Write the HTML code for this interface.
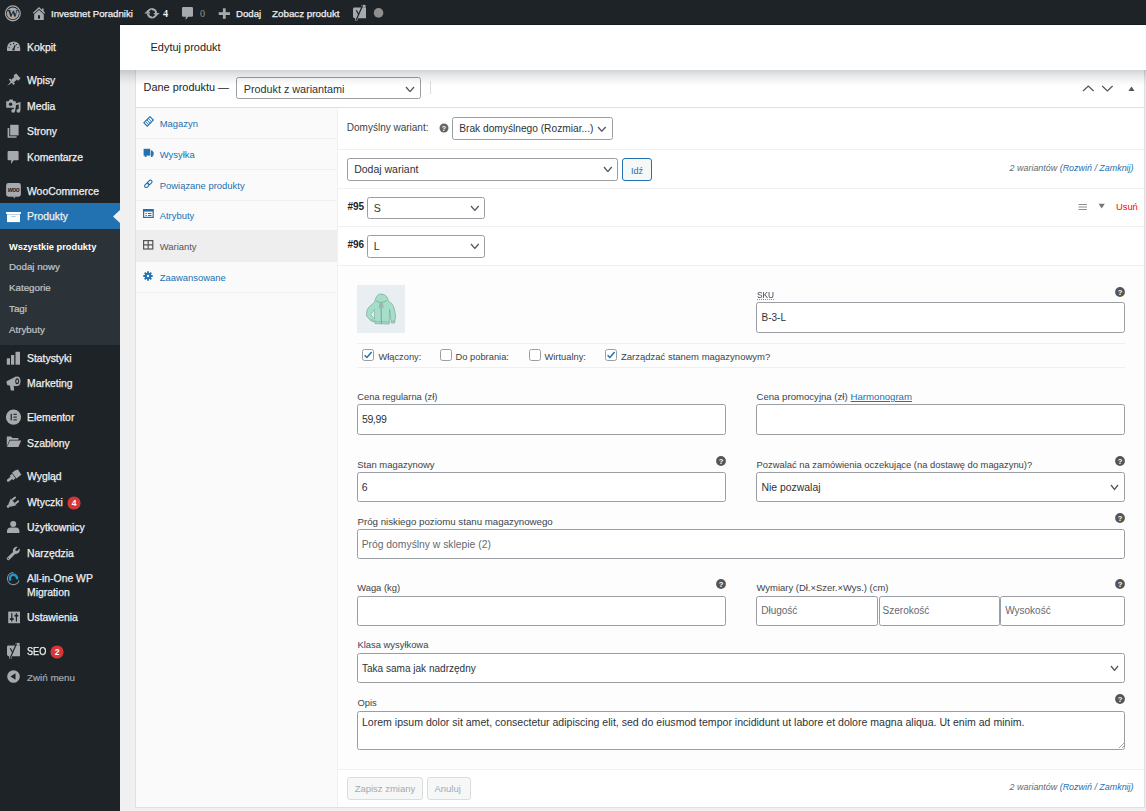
<!DOCTYPE html>
<html><head><meta charset="utf-8"><title>Edytuj produkt</title>
<style>
html,body{margin:0;padding:0;width:1146px;height:811px;overflow:hidden;background:#f0f0f1}
#root{position:relative;width:1146px;height:811px;overflow:hidden;font-family:"Liberation Sans",sans-serif}
.t{position:absolute;white-space:nowrap;font-family:"Liberation Sans",sans-serif}
.r{position:absolute;display:block}
</style></head><body><div id="root">
<div class="r" style="left:0px;top:0px;width:1146px;height:811px;background:#f0f0f1"></div>
<div class="r" style="left:0px;top:0px;width:1146px;height:24px;background:#1d2327"></div>
<svg class="r" style="left:4px;top:5px" width="18" height="18" viewBox="0 0 18 18"><circle cx="8.85" cy="8.35" r="7.4" fill="none" stroke="#a7aaad" stroke-width="1.3"/><circle cx="8.85" cy="8.35" r="5.9" fill="#a7aaad"/><text x="8.85" y="12.2" text-anchor="middle" font-family="Liberation Serif" font-weight="700" font-size="10.5" fill="#1d2327">W</text></svg>
<svg class="r" style="left:32px;top:7px" width="14" height="14" viewBox="0 0 14 14"><path d="M1.3 6.3 L7 1 L12.7 6.3" fill="none" stroke="#a7aaad" stroke-width="1.3"/><rect x="10" y="1.5" width="1.6" height="3.5" fill="#a7aaad"/><path d="M2.2 7.2 L7 2.9 L11.8 7.2 V12.9 H2.2Z" fill="#a7aaad"/><rect x="6" y="8.2" width="2" height="3.5" fill="#1d2327"/></svg>
<span class="t" style="left:51.00px;top:9px;font-size:9.64px;line-height:9.64px;color:#f0f0f1;font-weight:400;font-style:normal;-webkit-text-stroke:0.25px #f0f0f1">Investnet Poradniki</span>
<svg class="r" style="left:144px;top:8px" width="16" height="11" viewBox="0 0 16 11"><circle cx="8" cy="5.3" r="4.1" fill="none" stroke="#a7aaad" stroke-width="2.2"/><path d="M2.6 5.6 L8 1.3 L8 5.6Z" fill="#1d2327"/><path d="M13.4 5 L8 9.3 L8 5Z" fill="#1d2327"/><path d="M0.3 5.6 L3.9 2 L6.6 5.6Z" fill="#a7aaad"/><path d="M15.7 5 L12.1 8.6 L9.4 5Z" fill="#a7aaad"/></svg>
<span class="t" style="left:163.00px;top:9px;font-size:10.2px;line-height:10.2px;color:#f0f0f1;font-weight:700;font-style:normal;font-family:'Liberation Serif',serif">4</span>
<svg class="r" style="left:181px;top:6px" width="13" height="15" viewBox="0 0 13 15"><path d="M2.2 1 H10.8 Q12 1 12 2.2 V9.6 Q12 10.8 10.8 10.8 H7.2 L4.6 14 L4.8 10.8 H2.2 Q1 10.8 1 9.6 V2.2 Q1 1 2.2 1Z" fill="#a7aaad"/></svg>
<span class="t" style="left:199.90px;top:9px;font-size:10.2px;line-height:10.2px;color:#8f959a;font-weight:400;font-style:normal;font-family:'Liberation Serif',serif">0</span>
<svg class="r" style="left:218px;top:8px" width="13" height="11" viewBox="0 0 13 11"><rect x="4.9" y="0.3" width="2.8" height="10.5" fill="#a7aaad"/><rect x="0.7" y="4.2" width="11.3" height="2.8" fill="#a7aaad"/></svg>
<span class="t" style="left:236.00px;top:9px;font-size:9.64px;line-height:9.64px;color:#f0f0f1;font-weight:400;font-style:normal;-webkit-text-stroke:0.25px #f0f0f1">Dodaj</span>
<span class="t" style="left:272.00px;top:9px;font-size:9.8px;line-height:9.8px;color:#f0f0f1;font-weight:400;font-style:normal;-webkit-text-stroke:0.25px #f0f0f1">Zobacz produkt</span>
<svg class="r" style="left:352px;top:4px" width="16" height="18" viewBox="0 0 16 18"><path d="M2.4 3.5 H14 V14.3 H3 Q1 14.3 1 12.3 V4.9 Q1 3.5 2.4 3.5Z" fill="#a7aaad"/><path d="M9.6 0.9 H13.6 V3.6 H9.6Z" fill="#a7aaad"/><path d="M3 14 H6.2 L5.2 16.8 H3.2Z" fill="#a7aaad"/><path d="M4.3 6.3 L6.8 10.8" fill="none" stroke="#1d2327" stroke-width="1.2"/><path d="M10.6 1.6 L4 16.4" fill="none" stroke="#1d2327" stroke-width="1.2"/></svg>
<svg class="r" style="left:373px;top:7px" width="11" height="11" viewBox="0 0 11 11"><circle cx="5.55" cy="5.9" r="4.8" fill="#8f8f8f"/></svg>
<div class="r" style="left:0px;top:24px;width:120px;height:787px;background:#1d2327"></div>
<div class="r" style="left:0px;top:203px;width:120px;height:26px;background:#2271b1"></div>
<div class="r" style="left:0px;top:229px;width:120px;height:116px;background:#2c3338"></div>
<svg class="r" style="left:113px;top:210px" width="7" height="13" viewBox="0 0 7 13"><path d="M7 0 L0 6.5 L7 13Z" fill="#f0f0f1"/></svg>
<span class="t" style="left:27.00px;top:43px;font-size:10.4px;line-height:10.4px;color:#f0f0f1;font-weight:400;font-style:normal;-webkit-text-stroke:0.25px #f0f0f1">Kokpit</span>
<span class="t" style="left:27.00px;top:76px;font-size:10.4px;line-height:10.4px;color:#f0f0f1;font-weight:400;font-style:normal;-webkit-text-stroke:0.25px #f0f0f1">Wpisy</span>
<span class="t" style="left:27.00px;top:102px;font-size:10.4px;line-height:10.4px;color:#f0f0f1;font-weight:400;font-style:normal;-webkit-text-stroke:0.25px #f0f0f1">Media</span>
<span class="t" style="left:27.00px;top:127px;font-size:10.4px;line-height:10.4px;color:#f0f0f1;font-weight:400;font-style:normal;-webkit-text-stroke:0.25px #f0f0f1">Strony</span>
<span class="t" style="left:27.00px;top:153px;font-size:10.4px;line-height:10.4px;color:#f0f0f1;font-weight:400;font-style:normal;-webkit-text-stroke:0.25px #f0f0f1">Komentarze</span>
<span class="t" style="left:27.00px;top:187px;font-size:10.4px;line-height:10.4px;color:#f0f0f1;font-weight:400;font-style:normal;-webkit-text-stroke:0.25px #f0f0f1">WooCommerce</span>
<span class="t" style="left:27.00px;top:212px;font-size:10.4px;line-height:10.4px;color:#f0f0f1;font-weight:400;font-style:normal;-webkit-text-stroke:0.25px #f0f0f1">Produkty</span>
<span class="t" style="left:27.00px;top:354px;font-size:10.4px;line-height:10.4px;color:#f0f0f1;font-weight:400;font-style:normal;-webkit-text-stroke:0.25px #f0f0f1">Statystyki</span>
<span class="t" style="left:27.00px;top:379px;font-size:10.4px;line-height:10.4px;color:#f0f0f1;font-weight:400;font-style:normal;-webkit-text-stroke:0.25px #f0f0f1">Marketing</span>
<span class="t" style="left:27.00px;top:413px;font-size:10.4px;line-height:10.4px;color:#f0f0f1;font-weight:400;font-style:normal;-webkit-text-stroke:0.25px #f0f0f1">Elementor</span>
<span class="t" style="left:27.00px;top:439px;font-size:10.4px;line-height:10.4px;color:#f0f0f1;font-weight:400;font-style:normal;-webkit-text-stroke:0.25px #f0f0f1">Szablony</span>
<span class="t" style="left:27.00px;top:472px;font-size:10.4px;line-height:10.4px;color:#f0f0f1;font-weight:400;font-style:normal;-webkit-text-stroke:0.25px #f0f0f1">Wygląd</span>
<span class="t" style="left:27.00px;top:498px;font-size:10.4px;line-height:10.4px;color:#f0f0f1;font-weight:400;font-style:normal;-webkit-text-stroke:0.25px #f0f0f1">Wtyczki</span>
<span class="t" style="left:27.00px;top:523px;font-size:10.4px;line-height:10.4px;color:#f0f0f1;font-weight:400;font-style:normal;-webkit-text-stroke:0.25px #f0f0f1">Użytkownicy</span>
<span class="t" style="left:27.00px;top:549px;font-size:10.4px;line-height:10.4px;color:#f0f0f1;font-weight:400;font-style:normal;-webkit-text-stroke:0.25px #f0f0f1">Narzędzia</span>
<span class="t" style="left:27.00px;top:574px;font-size:10.4px;line-height:10.4px;color:#f0f0f1;font-weight:400;font-style:normal;-webkit-text-stroke:0.25px #f0f0f1">All-in-One WP</span>
<span class="t" style="left:27.00px;top:588px;font-size:10.4px;line-height:10.4px;color:#f0f0f1;font-weight:400;font-style:normal;-webkit-text-stroke:0.25px #f0f0f1">Migration</span>
<span class="t" style="left:27.00px;top:613px;font-size:10.4px;line-height:10.4px;color:#f0f0f1;font-weight:400;font-style:normal;-webkit-text-stroke:0.25px #f0f0f1">Ustawienia</span>
<span class="t" style="left:27.00px;top:647px;font-size:10.4px;line-height:10.4px;color:#f0f0f1;font-weight:400;font-style:normal;-webkit-text-stroke:0.25px #f0f0f1;display:inline-block;transform:scaleX(0.88);transform-origin:0 0">SEO</span>
<span class="t" style="left:27.00px;top:673px;font-size:9.8px;line-height:9.8px;color:#a7aaad;font-weight:400;font-style:normal;-webkit-text-stroke:0.2px #a7aaad">Zwiń menu</span>
<span class="t" style="left:9.00px;top:243px;font-size:9.3px;line-height:9.3px;color:#ffffff;font-weight:700;font-style:normal;">Wszystkie produkty</span>
<span class="t" style="left:9.00px;top:262px;font-size:9.75px;line-height:9.75px;color:#c3c4c7;font-weight:400;font-style:normal;-webkit-text-stroke:0.2px #c3c4c7">Dodaj nowy</span>
<span class="t" style="left:9.00px;top:283px;font-size:9.75px;line-height:9.75px;color:#c3c4c7;font-weight:400;font-style:normal;-webkit-text-stroke:0.2px #c3c4c7">Kategorie</span>
<span class="t" style="left:9.00px;top:304px;font-size:9.75px;line-height:9.75px;color:#c3c4c7;font-weight:400;font-style:normal;-webkit-text-stroke:0.2px #c3c4c7">Tagi</span>
<span class="t" style="left:9.00px;top:325px;font-size:9.75px;line-height:9.75px;color:#c3c4c7;font-weight:400;font-style:normal;-webkit-text-stroke:0.2px #c3c4c7">Atrybuty</span>
<svg class="r" style="left:67px;top:496px" width="14" height="14" viewBox="0 0 14 14"><circle cx="7" cy="7" r="6.6" fill="#d63638"/><text x="7" y="10.3" text-anchor="middle" font-family="Liberation Sans" font-weight="700" font-size="8.5" fill="#fff">4</text></svg>
<svg class="r" style="left:50px;top:645px" width="14" height="14" viewBox="0 0 14 14"><circle cx="7" cy="7" r="6.6" fill="#d63638"/><text x="7" y="10.3" text-anchor="middle" font-family="Liberation Sans" font-weight="700" font-size="8.5" fill="#fff">2</text></svg>
<svg class="r" style="left:6px;top:40px" width="15" height="12" viewBox="0 0 15 12"><path d="M1 11.1 V8 A6.6 6.6 0 0 1 14.2 8 V11.1Z" fill="#a7aaad"/><circle cx="7.6" cy="3.4" r="0.75" fill="#1d2327"/><circle cx="4.6" cy="4.6" r="0.7" fill="#1d2327"/><circle cx="10.6" cy="4.6" r="0.7" fill="#1d2327"/><path d="M2.6 7.6 H3.8 M11.4 7.6 H12.6" stroke="#1d2327" stroke-width="0.8"/><path d="M7.3 9.6 L9.2 5.2" stroke="#1d2327" stroke-width="1.3"/><rect x="6.4" y="8.6" width="2.2" height="1.8" fill="#1d2327"/></svg>
<svg class="r" style="left:6px;top:73px" width="15" height="15" viewBox="0 0 15 15"><g transform="translate(8.2,6.6) rotate(-42)" fill="#a7aaad"><path d="M-9.5 0 L-3.5 -0.9 L-3.5 0.9Z"/><rect x="-4" y="-3.6" width="1.8" height="7.2"/><rect x="-2.4" y="-1.9" width="4.6" height="3.8"/><rect x="2" y="-3.4" width="3.6" height="6.8" rx="0.6"/></g></svg>
<svg class="r" style="left:5px;top:98px" width="17" height="15" viewBox="0 0 17 15"><path d="M1.2 3.2 H3.6 L4.6 1.6 H7.6 L8.6 3.2 H10.8 V9.8 H1.2Z" fill="#a7aaad"/><circle cx="5.6" cy="6.2" r="1.7" fill="#1d2327"/><path d="M10.2 6.4 L14.6 5.2 V12.6" stroke="#a7aaad" stroke-width="1.8" fill="none"/><path d="M9.6 7 V12.4" stroke="#a7aaad" stroke-width="1.6"/><circle cx="8.2" cy="12.8" r="1.9" fill="#a7aaad"/><circle cx="13.4" cy="12.8" r="1.9" fill="#a7aaad"/></svg>
<svg class="r" style="left:7px;top:124px" width="13" height="15" viewBox="0 0 13 15"><rect x="3.2" y="0.8" width="8.4" height="10.6" fill="#a7aaad"/><path d="M0.6 4 H2.3 V12.3 H9.6 V13.8 H0.6Z" fill="#a7aaad"/></svg>
<svg class="r" style="left:7px;top:150px" width="13" height="15" viewBox="0 0 13 15"><path d="M1.6 1 H10.6 Q11.6 1 11.6 2 V9.2 Q11.6 10.2 10.6 10.2 H6.6 L4 13.9 L4.2 10.2 H1.6 Q0.6 10.2 0.6 9.2 V2 Q0.6 1 1.6 1Z" fill="#a7aaad"/></svg>
<svg class="r" style="left:5px;top:182px" width="17" height="17" viewBox="0 0 17 17"><rect x="1.1" y="1.1" width="14.8" height="13.6" rx="2.4" fill="#a7aaad"/><path d="M8.2 14.5 L9.2 16.4 L10.6 14.5Z" fill="#a7aaad"/><text x="8.6" y="10.4" text-anchor="middle" font-family="Liberation Sans" font-size="6.4" font-weight="700" font-style="italic" fill="#1d2327" letter-spacing="-0.4">woo</text></svg>
<svg class="r" style="left:5px;top:211px" width="17" height="12" viewBox="0 0 17 12"><rect x="1.1" y="1" width="14.8" height="2" fill="#fff"/><rect x="2" y="3.3" width="13" height="7.8" fill="#fff"/><rect x="6.2" y="5" width="4.6" height="0.8" fill="#9cc0e0"/></svg>
<svg class="r" style="left:6px;top:351px" width="15" height="14" viewBox="0 0 15 14"><rect x="0.8" y="7.3" width="3.2" height="6.4" fill="#a7aaad"/><rect x="5" y="4" width="3.2" height="9.7" fill="#a7aaad"/><rect x="9.5" y="0.8" width="4.5" height="12.9" fill="#a7aaad"/></svg>
<svg class="r" style="left:5px;top:375px" width="17" height="17" viewBox="0 0 17 17"><path d="M1.6 6.2 Q1.2 8.4 2.4 10.2 L11.5 11.2 L11 1.6Z" fill="#a7aaad"/><ellipse cx="12.2" cy="6.2" rx="3.3" ry="4.7" fill="#a7aaad"/><ellipse cx="12.2" cy="6.2" rx="1.9" ry="3" fill="#1d2327"/><ellipse cx="12.2" cy="6.2" rx="0.9" ry="1.6" fill="#a7aaad"/><path d="M4.8 9.8 L8.6 10.2 L9.2 15.4 L5.8 15.6Z" fill="#a7aaad"/></svg>
<svg class="r" style="left:5px;top:409px" width="17" height="17" viewBox="0 0 17 17"><circle cx="8.5" cy="8.1" r="7.6" fill="#a7aaad"/><rect x="5.6" y="4.8" width="1.2" height="6.6" fill="#1d2327"/><rect x="8.4" y="4.8" width="3.4" height="1.05" fill="#1d2327"/><rect x="8.4" y="7.6" width="3.4" height="1.05" fill="#1d2327"/><rect x="8.4" y="10.35" width="3.4" height="1.05" fill="#1d2327"/></svg>
<svg class="r" style="left:6px;top:436px" width="16" height="12" viewBox="0 0 16 12"><path d="M0.8 0.6 H5 L6.4 2 H12.4 V3.8 H3.6 L0.8 10.5Z" fill="#a7aaad"/><path d="M4 4.6 H15.2 L12.4 11 H1Z" fill="#a7aaad"/></svg>
<svg class="r" style="left:5px;top:469px" width="17" height="15" viewBox="0 0 17 15"><g transform="translate(8.6,7.2) rotate(-38)" fill="#a7aaad"><rect x="-8.2" y="-1.4" width="6" height="2.8" rx="1.4"/><rect x="-2.8" y="-2.8" width="3" height="5.6"/><path d="M0.8 -3.6 H4.6 L7.6 -2.6 L7 3.6 H0.8Z"/></g><path d="M0 0" stroke="#1d2327"/></svg>
<svg class="r" style="left:5px;top:495px" width="16" height="14" viewBox="0 0 16 14"><g transform="translate(8.2,7.2) rotate(-40)" fill="#a7aaad"><rect x="-8" y="-1.3" width="3.6" height="2.6" rx="1.3"/><path d="M-5 -1.6 L0.6 -4.4 V4.4 L-5 1.6Z"/><rect x="0.4" y="-3.4" width="5" height="1.9" rx="0.9"/><rect x="0.4" y="1.5" width="5" height="1.9" rx="0.9"/></g></svg>
<svg class="r" style="left:6px;top:520px" width="15" height="14" viewBox="0 0 15 14"><circle cx="7.2" cy="4" r="3" fill="#a7aaad"/><path d="M1 13 V11.2 Q1 7.4 4.8 7.4 H9.6 Q13.4 7.4 13.4 11.2 V13Z" fill="#a7aaad"/></svg>
<svg class="r" style="left:6px;top:546px" width="15" height="15" viewBox="0 0 15 15"><path d="M13.6 2.6 L11.2 5 L9.6 4.8 L9.4 3.2 L11.8 0.8 A4.1 4.1 0 0 0 7 5.9 L1.3 11.6 A1.45 1.45 0 0 0 3.4 13.7 L9.1 8 A4.1 4.1 0 0 0 13.6 2.6Z" fill="#a7aaad"/><circle cx="2.3" cy="12.6" r="0.6" fill="#1d2327"/></svg>
<svg class="r" style="left:6px;top:571px" width="15" height="15" viewBox="0 0 15 15"><path d="M13.1 9.5 A6 6 0 1 1 7.4 1.6" fill="none" stroke="#8c8f94" stroke-width="1.1"/><path d="M4.6 9.6 A3.6 3.6 0 1 1 11 8.2" fill="none" stroke="#1c9ad6" stroke-width="2.4"/></svg>
<svg class="r" style="left:7px;top:611px" width="14" height="13" viewBox="0 0 14 13"><rect x="1.2" y="0.6" width="11.8" height="11.6" fill="#a7aaad"/><rect x="4.2" y="2.2" width="1.2" height="8.4" fill="#1d2327"/><rect x="8.8" y="2.2" width="1.2" height="8.4" fill="#1d2327"/><rect x="2.9" y="7.2" width="3.8" height="1.8" fill="#1d2327"/><rect x="7.5" y="3.8" width="3.8" height="1.8" fill="#1d2327"/></svg>
<svg class="r" style="left:6px;top:642px" width="16" height="18" viewBox="0 0 16 18"><path d="M2.4 3.5 H14 V14.3 H3 Q1 14.3 1 12.3 V4.9 Q1 3.5 2.4 3.5Z" fill="#a7aaad"/><path d="M9.6 0.9 H13.6 V3.6 H9.6Z" fill="#a7aaad"/><path d="M3 14 H6.2 L5.2 16.8 H3.2Z" fill="#a7aaad"/><path d="M4.3 6.3 L6.8 10.8" fill="none" stroke="#1d2327" stroke-width="1.2"/><path d="M10.6 1.6 L4 16.4" fill="none" stroke="#1d2327" stroke-width="1.2"/></svg>
<svg class="r" style="left:7px;top:670px" width="13" height="13" viewBox="0 0 13 13"><circle cx="6.5" cy="6.5" r="6.3" fill="#a7aaad"/><path d="M3.5 6.5 L8.5 3.3 V9.7Z" fill="#1d2327"/></svg>
<div class="r" style="left:120px;top:24px;width:1026px;height:1px;background:#151a1e"></div>
<div class="r" style="left:120px;top:25px;width:1026px;height:45px;background:#fff"></div>
<span class="t" style="left:150.50px;top:42px;font-size:10.98px;line-height:10.98px;color:#1d2327;font-weight:400;font-style:normal;">Edytuj produkt</span>
<div class="r" style="left:135px;top:70px;width:1010px;height:738px;background:#fff;border:1px solid #dfe0e2;border-top:none;box-sizing:border-box"></div>
<div class="r" style="left:1145px;top:70px;width:1px;height:738px;background:#eeeeef"></div>
<div class="r" style="left:136px;top:107px;width:1008px;height:1px;background:#dfe0e2"></div>
<span class="t" style="left:143.60px;top:82px;font-size:10.9px;line-height:10.9px;color:#1d2327;font-weight:400;font-style:normal;">Dane produktu —</span>
<div class="r" style="left:236px;top:77px;width:185px;height:22px;background:#fff;border:1px solid #9a9da1;border-radius:2.5px;box-sizing:border-box"></div>
<span class="t" style="left:243.70px;top:84px;font-size:10.8px;line-height:10.8px;color:#2c3338;font-weight:400;font-style:normal;">Produkt z wariantami</span>
<svg class="r" style="left:405px;top:85.5px" width="10" height="6.6" viewBox="0 0 10 6.6"><path d="M1 1 L5.0 5.6 L9 1" fill="none" stroke="#50575e" stroke-width="1.3"/></svg>
<div class="r" style="left:430px;top:81px;width:1px;height:13px;background:#dcdcde"></div>
<svg class="r" style="left:1082px;top:84px" width="13" height="8" viewBox="0 0 13 8"><path d="M1 7 L6.3 2 L11.6 7" fill="none" stroke="#50575e" stroke-width="1.25"/></svg>
<svg class="r" style="left:1101px;top:84px" width="13" height="8" viewBox="0 0 13 8"><path d="M1.2 2 L6.4 7 L11.6 2" fill="none" stroke="#50575e" stroke-width="1.25"/></svg>
<svg class="r" style="left:1128px;top:86px" width="7" height="5" viewBox="0 0 7 5"><path d="M0.4 4.9 L3.5 0.6 L6.6 4.9Z" fill="#50575e"/></svg>
<div class="r" style="left:136px;top:108px;width:201px;height:699px;background:#fafafa"></div>
<div class="r" style="left:337px;top:108px;width:1px;height:699px;background:#f1f1f1"></div>
<div class="r" style="left:136px;top:138px;width:201px;height:1px;background:#efefef"></div>
<div class="r" style="left:136px;top:169px;width:201px;height:1px;background:#efefef"></div>
<div class="r" style="left:136px;top:200px;width:201px;height:1px;background:#efefef"></div>
<div class="r" style="left:136px;top:261px;width:201px;height:1px;background:#efefef"></div>
<div class="r" style="left:136px;top:292px;width:201px;height:1px;background:#efefef"></div>
<div class="r" style="left:136px;top:230px;width:201px;height:31px;background:#eeeeee"></div>
<span class="t" style="left:159.70px;top:119px;font-size:9.45px;line-height:9.45px;color:#2271b1;font-weight:400;font-style:normal;">Magazyn</span>
<span class="t" style="left:159.70px;top:150px;font-size:9.45px;line-height:9.45px;color:#2271b1;font-weight:400;font-style:normal;">Wysyłka</span>
<span class="t" style="left:159.70px;top:181px;font-size:9.45px;line-height:9.45px;color:#2271b1;font-weight:400;font-style:normal;">Powiązane produkty</span>
<span class="t" style="left:159.70px;top:211px;font-size:9.45px;line-height:9.45px;color:#2271b1;font-weight:400;font-style:normal;">Atrybuty</span>
<span class="t" style="left:159.70px;top:242px;font-size:9.45px;line-height:9.45px;color:#555555;font-weight:400;font-style:normal;">Warianty</span>
<span class="t" style="left:159.70px;top:273px;font-size:9.45px;line-height:9.45px;color:#2271b1;font-weight:400;font-style:normal;">Zaawansowane</span>
<svg class="r" style="left:143px;top:116px" width="12" height="12" viewBox="0 0 12 12"><g transform="translate(5.6,5.4) rotate(-45)"><rect x="-4.3" y="-2.4" width="8.6" height="4.8" fill="none" stroke="#2271b1" stroke-width="1.1"/><path d="M-2.2 -2.4 V2.4 M-0.2 -2.4 V2.4 M1.8 -2.4 V2.4" stroke="#2271b1" stroke-width="0.9"/></g></svg>
<svg class="r" style="left:143px;top:148px" width="12" height="10" viewBox="0 0 12 10"><rect x="0.6" y="0.8" width="6.6" height="6.8" fill="#2271b1"/><path d="M7.8 2.6 H9.2 L10.6 4.4 V7.6 H7.8Z" fill="#2271b1"/><circle cx="2.6" cy="8" r="1.1" fill="#2271b1"/><circle cx="8.8" cy="8" r="1.1" fill="#2271b1"/></svg>
<svg class="r" style="left:143px;top:179px" width="11" height="11" viewBox="0 0 11 11"><g transform="translate(5.3,4.8) rotate(-45)" fill="none" stroke="#2271b1" stroke-width="1.1"><rect x="-4.6" y="-1.6" width="5" height="3.2" rx="1.6"/><rect x="-0.4" y="-1.6" width="5" height="3.2" rx="1.6"/></g></svg>
<svg class="r" style="left:143px;top:209px" width="11" height="9" viewBox="0 0 11 9"><rect x="0.6" y="0.6" width="9.6" height="7.8" fill="none" stroke="#2271b1" stroke-width="1.2"/><rect x="0.6" y="0.6" width="9.6" height="2" fill="#2271b1"/><path d="M2.5 4.5 H3.8 M5 4.5 H8.5 M2.5 6.5 H3.8 M5 6.5 H8.5" stroke="#2271b1" stroke-width="1"/></svg>
<svg class="r" style="left:143px;top:240px" width="11" height="10" viewBox="0 0 11 10"><rect x="0.6" y="0.6" width="9.2" height="8.4" fill="none" stroke="#555" stroke-width="1.2"/><path d="M5.2 0.6 V9 M0.6 4.8 H9.8" stroke="#555" stroke-width="1.2"/></svg>
<svg class="r" style="left:143px;top:271px" width="10" height="10" viewBox="0 0 10 10"><circle cx="5" cy="5" r="3.3" fill="#2271b1"/><circle cx="5" cy="5" r="1.3" fill="#fafafa"/><path d="M5 0.3 V9.7 M0.3 5 H9.7 M1.7 1.7 L8.3 8.3 M8.3 1.7 L1.7 8.3" stroke="#2271b1" stroke-width="1.8"/><circle cx="5" cy="5" r="1.2" fill="#fafafa"/></svg>
<div class="r" style="left:338px;top:108px;width:806px;height:699px;background:#fff"></div>
<div class="r" style="left:338px;top:149px;width:806px;height:1px;background:#f0f0f0"></div>
<div class="r" style="left:338px;top:188px;width:806px;height:1px;background:#f0f0f0"></div>
<div class="r" style="left:338px;top:226px;width:806px;height:1px;background:#f0f0f0"></div>
<div class="r" style="left:338px;top:265px;width:806px;height:1px;background:#f0f0f0"></div>
<div class="r" style="left:338px;top:266px;width:806px;height:503px;background:#fdfdfd"></div>
<div class="r" style="left:338px;top:769px;width:806px;height:1px;background:#f0f0f0"></div>
<span class="t" style="left:346.80px;top:123px;font-size:10.0px;line-height:10.0px;color:#3c434a;font-weight:400;font-style:normal;">Domyślny wariant:</span>
<svg class="r" style="left:439px;top:123px" width="10" height="10" viewBox="0 0 10 10"><circle cx="5" cy="5" r="4.5" fill="#666"/><text x="5" y="8" text-anchor="middle" font-family="Liberation Sans" font-weight="700" font-size="7" fill="#fff">?</text></svg>
<div class="r" style="left:452px;top:117px;width:161px;height:23px;background:#fff;border:1px solid #9a9da1;border-radius:2.5px;box-sizing:border-box"></div>
<span class="t" style="left:459.20px;top:124px;font-size:10.2px;line-height:10.2px;color:#2c3338;font-weight:400;font-style:normal;">Brak domyślnego (Rozmiar...)</span>
<svg class="r" style="left:597.3px;top:125.9px" width="9.7" height="6.2" viewBox="0 0 9.7 6.2"><path d="M1 1 L4.85 5.2 L8.7 1" fill="none" stroke="#50575e" stroke-width="1.3"/></svg>
<div class="r" style="left:347px;top:158px;width:271px;height:23px;background:#fff;border:1px solid #9a9da1;border-radius:2.5px;box-sizing:border-box"></div>
<span class="t" style="left:354.20px;top:164px;font-size:10.5px;line-height:10.5px;color:#2c3338;font-weight:400;font-style:normal;">Dodaj wariant</span>
<svg class="r" style="left:602.5px;top:165.6px" width="9.7" height="6.6" viewBox="0 0 9.7 6.6"><path d="M1 1 L4.85 5.6 L8.7 1" fill="none" stroke="#50575e" stroke-width="1.3"/></svg>
<div class="r" style="left:622px;top:158px;width:30px;height:23px;background:#f6f7f7;border:1px solid #2271b1;border-radius:3px;box-sizing:border-box"></div>
<span class="t" style="left:631.00px;top:167px;font-size:9.0px;line-height:9.0px;color:#2271b1;font-weight:400;font-style:normal;">Idź</span>
<span class="t" style="left:1009.60px;top:164px;font-size:8.94px;line-height:8.94px;color:#646970;font-weight:400;font-style:italic;">2 wariantów <span style="color:#2271b1">(Rozwiń / Zamknij)</span></span>
<span class="t" style="left:347.50px;top:202px;font-size:10.0px;line-height:10.0px;color:#1d2327;font-weight:700;font-style:normal;">#95</span>
<div class="r" style="left:367px;top:197px;width:118px;height:22px;background:#fff;border:1px solid #9a9da1;border-radius:2.5px;box-sizing:border-box"></div>
<span class="t" style="left:373.70px;top:203px;font-size:10.5px;line-height:10.5px;color:#2c3338;font-weight:400;font-style:normal;">S</span>
<svg class="r" style="left:469.8px;top:204.7px" width="9.7" height="6.4" viewBox="0 0 9.7 6.4"><path d="M1 1 L4.85 5.4 L8.7 1" fill="none" stroke="#50575e" stroke-width="1.3"/></svg>
<svg class="r" style="left:1078px;top:203px" width="10" height="8" viewBox="0 0 10 8"><path d="M0.5 1.5 H9 M0.5 4 H9 M0.5 6.5 H9" stroke="#8c8f94" stroke-width="1.1"/></svg>
<svg class="r" style="left:1098px;top:203px" width="8" height="6" viewBox="0 0 8 6"><path d="M0.6 0.8 H6.8 L3.7 5.4Z" fill="#72777c"/></svg>
<span class="t" style="left:1115.90px;top:202px;font-size:9.42px;line-height:9.42px;color:#ff0000;font-weight:400;font-style:normal;">Usuń</span>
<span class="t" style="left:347.50px;top:240px;font-size:10.0px;line-height:10.0px;color:#1d2327;font-weight:700;font-style:normal;">#96</span>
<div class="r" style="left:367px;top:235px;width:118px;height:23px;background:#fff;border:1px solid #9a9da1;border-radius:2.5px;box-sizing:border-box"></div>
<span class="t" style="left:373.70px;top:241px;font-size:10.5px;line-height:10.5px;color:#2c3338;font-weight:400;font-style:normal;">L</span>
<svg class="r" style="left:469.8px;top:243px" width="9.7" height="6.4" viewBox="0 0 9.7 6.4"><path d="M1 1 L4.85 5.4 L8.7 1" fill="none" stroke="#50575e" stroke-width="1.3"/></svg>
<div class="r" style="left:357px;top:285px;width:48px;height:48px;background:#e9eef2"></div>
<svg class="r" style="left:357px;top:285px" width="48" height="48" viewBox="0 0 48 48"><g style="filter:blur(0.25px)"><path d="M23.5 9 C27 9 30 11 30.8 13.8 L31.5 16.5 C34.5 17.5 36.5 20 37.5 25 L38.6 31 L37.6 38 L34.3 38 L33.6 32 L32.6 24.5 L32.2 39 L18 38.6 L17.6 35.6 L16.2 37 L13.4 35.4 L9.6 31 C9 28 10 24 12.5 21.5 L17.3 17.5 L18.2 15.2 C19 11.5 21 9 23.5 9Z" fill="#a6dec9" stroke="#74a898" stroke-width="0.7"/><path d="M17.4 24.5 L13.8 29.6 L17.6 34.2Z" fill="#e9eef2" stroke="#74a898" stroke-width="0.6"/><path d="M24 18 L24.4 38.6" stroke="#7f958f" stroke-width="0.9"/><path d="M18.8 15.6 Q24 19.5 29.8 15.4" stroke="#74a898" stroke-width="0.8" fill="none"/><path d="M23 18.5 L22.6 23.5 M25.6 18.5 L26 23" stroke="#7f958f" stroke-width="0.6"/><path d="M18 36.6 L32.2 36.9 M34.4 36 L37.8 36.2 M13.8 33.8 L16.8 35.8" stroke="#74a898" stroke-width="0.6"/></g></svg>
<div class="r" style="left:357px;top:343px;width:768px;height:1px;background:#eeeeee"></div>
<div class="r" style="left:357px;top:367px;width:768px;height:1px;background:#eeeeee"></div>
<div class="r" style="left:362px;top:349px;width:12px;height:12px;background:#fff;border:1px solid #9a9da1;border-radius:2.5px;box-sizing:border-box"></div>
<svg class="r" style="left:362px;top:349px" width="12" height="12" viewBox="0 0 12 12"><path d="M2.6 6.2 L4.9 8.5 L9.6 2.9" fill="none" stroke="#2271b1" stroke-width="1.5"/></svg>
<span class="t" style="left:378.40px;top:353px;font-size:9.32px;line-height:9.32px;color:#3c434a;font-weight:400;font-style:normal;">Włączony:</span>
<div class="r" style="left:439.5px;top:349px;width:12.0px;height:12px;background:#fff;border:1px solid #9a9da1;border-radius:2.5px;box-sizing:border-box"></div>
<span class="t" style="left:455.60px;top:353px;font-size:9.32px;line-height:9.32px;color:#3c434a;font-weight:400;font-style:normal;">Do pobrania:</span>
<div class="r" style="left:529px;top:349px;width:12px;height:12px;background:#fff;border:1px solid #9a9da1;border-radius:2.5px;box-sizing:border-box"></div>
<span class="t" style="left:544.50px;top:353px;font-size:9.32px;line-height:9.32px;color:#3c434a;font-weight:400;font-style:normal;">Wirtualny:</span>
<div class="r" style="left:605px;top:349px;width:12px;height:12px;background:#fff;border:1px solid #9a9da1;border-radius:2.5px;box-sizing:border-box"></div>
<svg class="r" style="left:605px;top:349px" width="12" height="12" viewBox="0 0 12 12"><path d="M2.6 6.2 L4.9 8.5 L9.6 2.9" fill="none" stroke="#2271b1" stroke-width="1.5"/></svg>
<span class="t" style="left:621.00px;top:352px;font-size:9.49px;line-height:9.49px;color:#3c434a;font-weight:400;font-style:normal;">Zarządzać stanem magazynowym?</span>
<span class="t" style="left:756.70px;top:290px;font-size:9.9px;line-height:9.9px;color:#3c434a;font-weight:400;font-style:normal;display:inline-block;transform:scaleX(0.84);transform-origin:0 0">SKU</span>
<div class="r" style="left:757px;top:299px;width:17px;height:1px;background:repeating-linear-gradient(to right,#8c8f94 0 1px,transparent 1px 2px)"></div>
<svg class="r" style="left:1115.2px;top:287px" width="10" height="10" viewBox="0 0 10 10"><circle cx="5" cy="5" r="4.9" fill="#555"/><text x="5" y="8.3" text-anchor="middle" font-family="Liberation Sans" font-weight="700" font-size="7.6" fill="#fff">?</text></svg>
<div class="r" style="left:756px;top:302px;width:369px;height:31px;background:#fff;border:1px solid #9a9da1;border-radius:2.5px;box-sizing:border-box"></div>
<span class="t" style="left:761.50px;top:313px;font-size:10.0px;line-height:10.0px;color:#2c3338;font-weight:400;font-style:normal;">B-3-L</span>
<span class="t" style="left:357.20px;top:392px;font-size:9.39px;line-height:9.39px;color:#3c434a;font-weight:400;font-style:normal;">Cena regularna (zł)</span>
<div class="r" style="left:357px;top:404px;width:369px;height:31px;background:#fff;border:1px solid #9a9da1;border-radius:2.5px;box-sizing:border-box"></div>
<span class="t" style="left:361.90px;top:414px;font-size:10.5px;line-height:10.5px;color:#2c3338;font-weight:400;font-style:normal;letter-spacing:-0.35px">59,99</span>
<span class="t" style="left:756.50px;top:392px;font-size:9.6px;line-height:9.6px;color:#3c434a;font-weight:400;font-style:normal;">Cena promocyjna (zł)</span>
<span class="t" style="left:850.60px;top:392px;font-size:9.6px;line-height:9.6px;color:#2271b1;font-weight:400;font-style:normal;text-decoration:underline;text-underline-offset:1px">Harmonogram</span>
<div class="r" style="left:756px;top:404px;width:369px;height:31px;background:#fff;border:1px solid #9a9da1;border-radius:2.5px;box-sizing:border-box"></div>
<span class="t" style="left:357.20px;top:460px;font-size:9.47px;line-height:9.47px;color:#3c434a;font-weight:400;font-style:normal;">Stan magazynowy</span>
<svg class="r" style="left:716px;top:456px" width="10" height="10" viewBox="0 0 10 10"><circle cx="5" cy="5" r="4.9" fill="#555"/><text x="5" y="8.3" text-anchor="middle" font-family="Liberation Sans" font-weight="700" font-size="7.6" fill="#fff">?</text></svg>
<div class="r" style="left:357px;top:472px;width:369px;height:30px;background:#fff;border:1px solid #9a9da1;border-radius:2.5px;box-sizing:border-box"></div>
<span class="t" style="left:361.70px;top:482px;font-size:10.5px;line-height:10.5px;color:#2c3338;font-weight:400;font-style:normal;">6</span>
<span class="t" style="left:756.50px;top:460px;font-size:9.39px;line-height:9.39px;color:#3c434a;font-weight:400;font-style:normal;">Pozwalać na zamówienia oczekujące (na dostawę do magazynu)?</span>
<svg class="r" style="left:1115.2px;top:456px" width="10" height="10" viewBox="0 0 10 10"><circle cx="5" cy="5" r="4.9" fill="#555"/><text x="5" y="8.3" text-anchor="middle" font-family="Liberation Sans" font-weight="700" font-size="7.6" fill="#fff">?</text></svg>
<div class="r" style="left:756px;top:472px;width:369px;height:30px;background:#fff;border:1px solid #9a9da1;border-radius:2.5px;box-sizing:border-box"></div>
<span class="t" style="left:761.40px;top:483px;font-size:10.45px;line-height:10.45px;color:#2c3338;font-weight:400;font-style:normal;">Nie pozwalaj</span>
<svg class="r" style="left:1110px;top:484.3px" width="9" height="6.4" viewBox="0 0 9 6.4"><path d="M1 1 L4.5 5.4 L8 1" fill="none" stroke="#50575e" stroke-width="1.3"/></svg>
<span class="t" style="left:357.50px;top:517px;font-size:9.71px;line-height:9.71px;color:#3c434a;font-weight:400;font-style:normal;">Próg niskiego poziomu stanu magazynowego</span>
<svg class="r" style="left:1115.2px;top:513px" width="10" height="10" viewBox="0 0 10 10"><circle cx="5" cy="5" r="4.9" fill="#555"/><text x="5" y="8.3" text-anchor="middle" font-family="Liberation Sans" font-weight="700" font-size="7.6" fill="#fff">?</text></svg>
<div class="r" style="left:357px;top:529px;width:768px;height:30px;background:#fff;border:1px solid #9a9da1;border-radius:2.5px;box-sizing:border-box"></div>
<span class="t" style="left:361.70px;top:540px;font-size:10.33px;line-height:10.33px;color:#646970;font-weight:400;font-style:normal;">Próg domyślny w sklepie (2)</span>
<span class="t" style="left:357.20px;top:583px;font-size:9.39px;line-height:9.39px;color:#3c434a;font-weight:400;font-style:normal;">Waga (kg)</span>
<svg class="r" style="left:716px;top:579px" width="10" height="10" viewBox="0 0 10 10"><circle cx="5" cy="5" r="4.9" fill="#555"/><text x="5" y="8.3" text-anchor="middle" font-family="Liberation Sans" font-weight="700" font-size="7.6" fill="#fff">?</text></svg>
<div class="r" style="left:357px;top:596px;width:369px;height:30px;background:#fff;border:1px solid #9a9da1;border-radius:2.5px;box-sizing:border-box"></div>
<span class="t" style="left:756.50px;top:583px;font-size:9.45px;line-height:9.45px;color:#3c434a;font-weight:400;font-style:normal;">Wymiary (Dł.×Szer.×Wys.) (cm)</span>
<svg class="r" style="left:1115.2px;top:579px" width="10" height="10" viewBox="0 0 10 10"><circle cx="5" cy="5" r="4.9" fill="#555"/><text x="5" y="8.3" text-anchor="middle" font-family="Liberation Sans" font-weight="700" font-size="7.6" fill="#fff">?</text></svg>
<div class="r" style="left:756px;top:596px;width:122px;height:30px;background:#fff;border:1px solid #9a9da1;border-radius:2.5px;box-sizing:border-box"></div>
<div class="r" style="left:879px;top:596px;width:121px;height:30px;background:#fff;border:1px solid #9a9da1;border-radius:2.5px;box-sizing:border-box"></div>
<div class="r" style="left:1000px;top:596px;width:125px;height:30px;background:#fff;border:1px solid #9a9da1;border-radius:2.5px;box-sizing:border-box"></div>
<span class="t" style="left:761.20px;top:606px;font-size:10.0px;line-height:10.0px;color:#646970;font-weight:400;font-style:normal;">Długość</span>
<span class="t" style="left:882.60px;top:606px;font-size:10.0px;line-height:10.0px;color:#646970;font-weight:400;font-style:normal;">Szerokość</span>
<span class="t" style="left:1005.20px;top:606px;font-size:10.0px;line-height:10.0px;color:#646970;font-weight:400;font-style:normal;">Wysokość</span>
<span class="t" style="left:357.50px;top:640px;font-size:9.39px;line-height:9.39px;color:#3c434a;font-weight:400;font-style:normal;">Klasa wysyłkowa</span>
<div class="r" style="left:357px;top:653px;width:768px;height:30px;background:#fff;border:1px solid #9a9da1;border-radius:2.5px;box-sizing:border-box"></div>
<span class="t" style="left:362.00px;top:664px;font-size:10.04px;line-height:10.04px;color:#2c3338;font-weight:400;font-style:normal;">Taka sama jak nadrzędny</span>
<svg class="r" style="left:1110px;top:664.5px" width="9" height="6.4" viewBox="0 0 9 6.4"><path d="M1 1 L4.5 5.4 L8 1" fill="none" stroke="#50575e" stroke-width="1.3"/></svg>
<span class="t" style="left:357.50px;top:698px;font-size:9.39px;line-height:9.39px;color:#3c434a;font-weight:400;font-style:normal;">Opis</span>
<svg class="r" style="left:1115.2px;top:694px" width="10" height="10" viewBox="0 0 10 10"><circle cx="5" cy="5" r="4.9" fill="#555"/><text x="5" y="8.3" text-anchor="middle" font-family="Liberation Sans" font-weight="700" font-size="7.6" fill="#fff">?</text></svg>
<div class="r" style="left:357px;top:711px;width:768px;height:39px;background:#fff;border:1px solid #9a9da1;border-radius:2.5px;box-sizing:border-box"></div>
<svg class="r" style="left:1117px;top:741px" width="8" height="8" viewBox="0 0 8 8"><path d="M7 2 L2 7 M7 5 L5 7" stroke="#8c8f94" stroke-width="0.8"/></svg>
<span class="t" style="left:362.00px;top:717px;font-size:10.56px;line-height:10.56px;color:#2c3338;font-weight:400;font-style:normal;">Lorem ipsum dolor sit amet, consectetur adipiscing elit, sed do eiusmod tempor incididunt ut labore et dolore magna aliqua. Ut enim ad minim.</span>
<div class="r" style="left:347px;top:777px;width:76px;height:23px;background:#f6f7f7;border:1px solid #dcdcde;border-radius:3px;box-sizing:border-box"></div>
<span class="t" style="left:354.70px;top:784px;font-size:9.47px;line-height:9.47px;color:#a7aaad;font-weight:400;font-style:normal;">Zapisz zmiany</span>
<div class="r" style="left:427px;top:777px;width:44px;height:23px;background:#f6f7f7;border:1px solid #dcdcde;border-radius:3px;box-sizing:border-box"></div>
<span class="t" style="left:434.50px;top:784px;font-size:9.47px;line-height:9.47px;color:#a7aaad;font-weight:400;font-style:normal;">Anuluj</span>
<span class="t" style="left:1009.60px;top:783px;font-size:8.94px;line-height:8.94px;color:#646970;font-weight:400;font-style:italic;">2 wariantów <span style="color:#2271b1">(Rozwiń / Zamknij)</span></span>
<div class="r" style="left:120px;top:70px;width:1026px;height:16px;background:linear-gradient(to bottom,rgba(30,40,50,0.2) 0%,rgba(30,40,50,0.11) 35%,rgba(30,40,50,0.04) 70%,rgba(30,40,50,0) 100%)"></div>
</div></body></html>
